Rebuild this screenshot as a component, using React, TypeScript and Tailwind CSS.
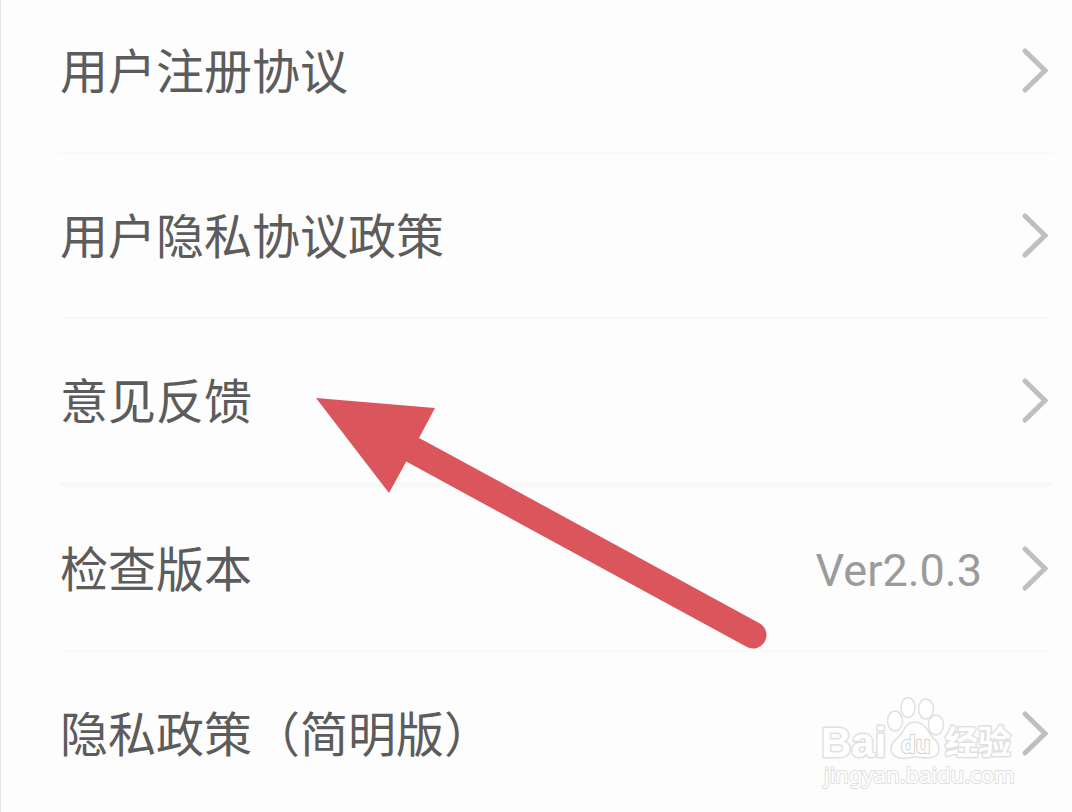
type Item = { label: string; value?: string; thick?: boolean };

const items: Item[] = [
  { label: "用户注册协议" },
  { label: "用户隐私协议政策" },
  { label: "意见反馈", thick: true },
  { label: "检查版本", value: "Ver2.0.3" },
  { label: "隐私政策（简明版）" },
];

function Chevron() {
  return (
    <svg
      aria-hidden="true"
      viewBox="0 0 32 48"
      className="h-12 w-8 shrink-0 fill-none stroke-[#bfbfbf] stroke-5"
      strokeLinecap="round"
      strokeLinejoin="miter"
    >
      <path d="M5 4 25 23.5 5 43" />
    </svg>
  );
}

function Row({ item, first, last }: { item: Item; first: boolean; last: boolean }) {
  const border = last ? "" : item.thick ? "border-b-5 border-[#f8f8f8]" : "border-b-2 border-[#f9f9f9]";
  return (
    <li className={border}>
      <button
        type="button"
        className={`flex w-full items-center pb-[57px] text-left ${first ? "pt-[47px]" : "pt-[58px]"}`}
      >
        <span className="flex-1 pb-1.5 text-5xl leading-[42px] text-[#5c5c5c]">{item.label}</span>
        {item.value && (
          <span className="mr-[38px] pt-1 font-[Roboto] text-[45px] leading-11 text-[#9b9b9b]">{item.value}</span>
        )}
        <Chevron />
      </button>
    </li>
  );
}

function Pointer() {
  return (
    <svg
      aria-hidden="true"
      viewBox="0 0 460 260"
      className="pointer-events-none absolute top-[394px] left-[311px] h-[260px] w-[460px]"
    >
      <path d="M4 4 123 14 107 44 94 68 77 99Z" fill="#da565c" />
      <path d="M92 51 441 241" stroke="#da565c" strokeWidth="27" strokeLinecap="round" />
    </svg>
  );
}

function Watermark() {
  return (
    <svg
      aria-label="Baidu"
      viewBox="0 0 200 100"
      className="pointer-events-none absolute top-[692px] right-[54px] h-[100px] w-[200px]"
      fill="#ffffff"
      stroke="#e0e0e0"
      strokeWidth="1.5"
      strokeLinejoin="round"
      fontFamily="Liberation Sans, Noto Sans CJK SC, sans-serif"
    >
      <g strokeWidth="3" paintOrder="stroke" fontWeight="700">
        <text x="3" y="65" fontSize="42">Bai</text>
        <text x="127" y="62" fontSize="33">经验</text>
      </g>
      <ellipse cx="77" cy="29" rx="7.5" ry="10" />
      <ellipse cx="90" cy="15.5" rx="7" ry="10" />
      <ellipse cx="108" cy="17" rx="7.5" ry="10" />
      <ellipse cx="118" cy="33" rx="7.5" ry="10" />
      <path d="M97 30C105 30 109 36 112 42C116 48 121 49 121 57C121 63 116 66 110 66C105 66 102 65 97 65C92 65 89 67 84 66C77 66 73 62 73 57C73 49 80 47 84 41C87 35 90 30 97 30Z" />
      <text x="83" y="61" fontSize="24" fontWeight="700" stroke="#d2d2d2" strokeWidth="2" paintOrder="stroke">du</text>
      <text x="6" y="91" fontSize="22" fontFamily="Noto Sans, sans-serif" strokeWidth="2" paintOrder="stroke">jingyan.baidu.com</text>
    </svg>
  );
}

export default function App() {
  return (
    <main className="relative min-h-screen overflow-hidden border-l border-[#e6e6e6] bg-[#fdfdfd] pr-5 pl-[59px] font-['Noto_Sans_CJK_SC',sans-serif]">
      <ul>
        {items.map((item, i) => (
          <Row key={item.label} item={item} first={i === 0} last={i === items.length - 1} />
        ))}
      </ul>
      <Pointer />
      <Watermark />
    </main>
  );
}
